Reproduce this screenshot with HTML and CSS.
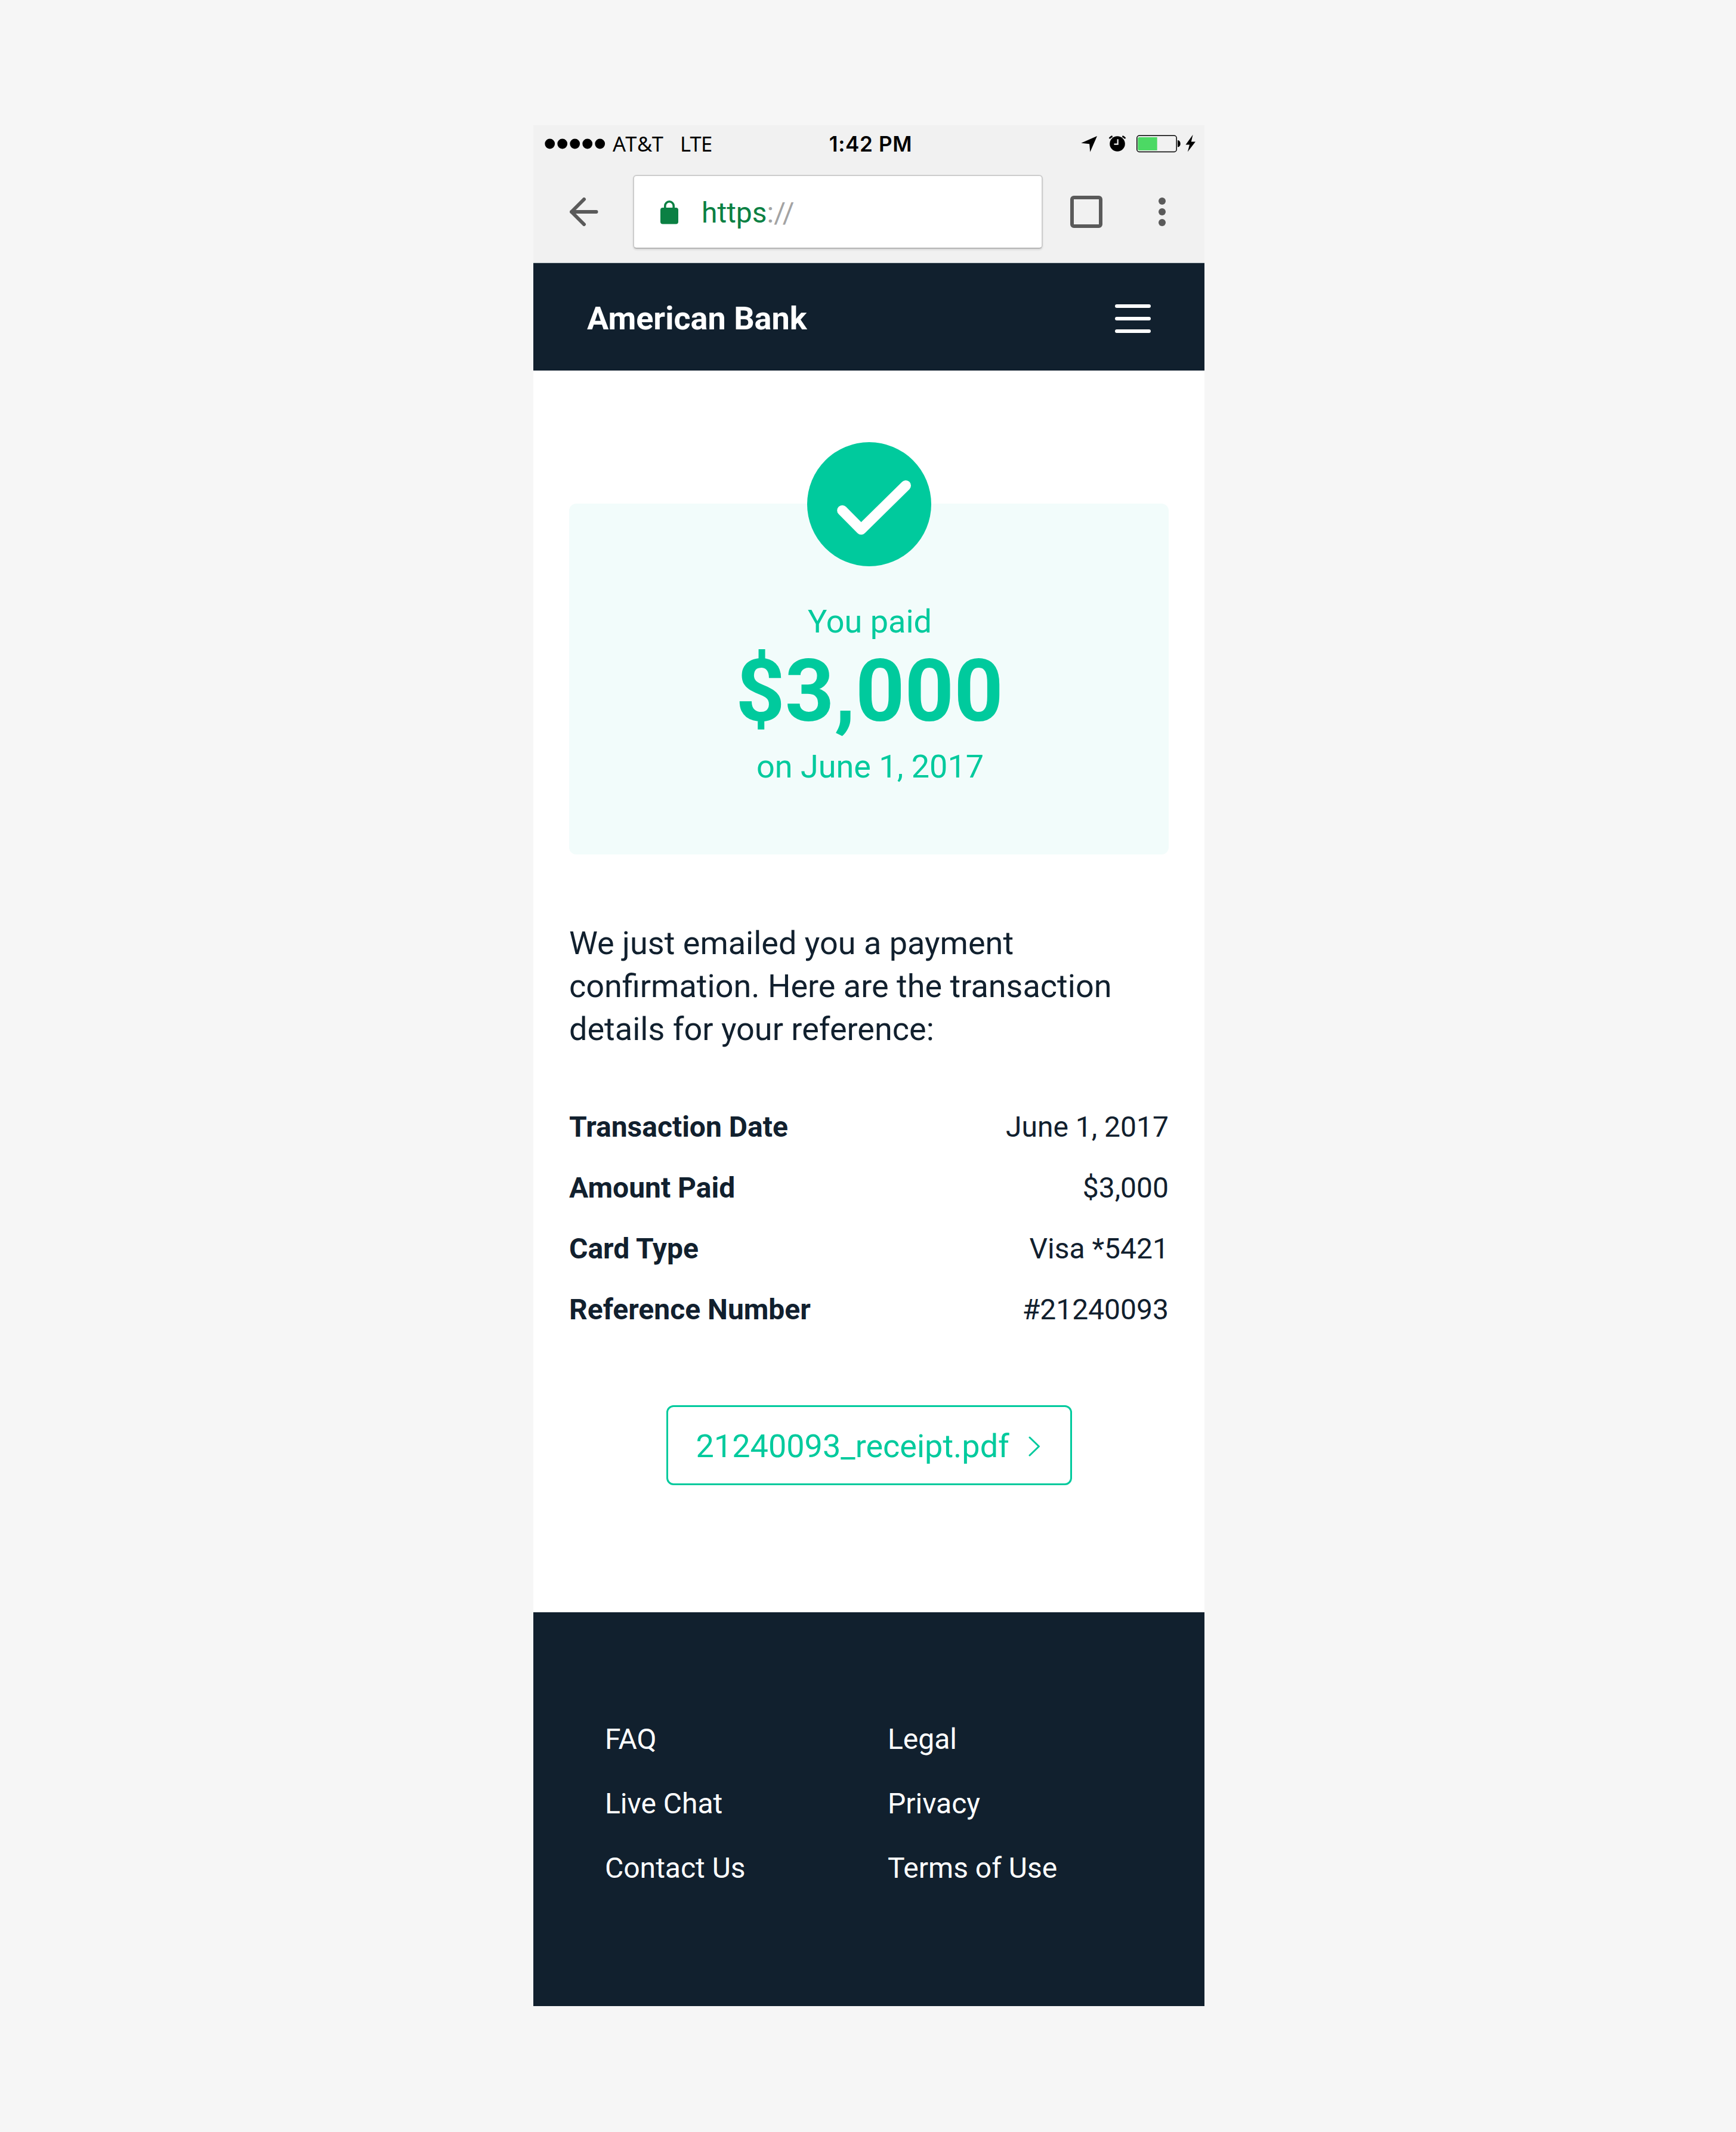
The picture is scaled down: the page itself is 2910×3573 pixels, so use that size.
FILE: index.html
```html
<!DOCTYPE html>
<html lang="en">
<head>
<meta charset="utf-8">
<title>American Bank – Payment confirmation</title>
<link rel="stylesheet" href="styles.css">
</head>
<body>
<div class="phone">
  <div class="browser">
    <div class="status">
      <div class="carrier">
        <svg class="signal" width="102" height="18" viewBox="0 0 102 18"><circle cx="8.7" cy="9" r="8.4"/><circle cx="29.7" cy="9" r="8.4"/><circle cx="50.7" cy="9" r="8.4"/><circle cx="71.7" cy="9" r="8.4"/><circle cx="92.7" cy="9" r="8.4"/></svg>
        <span class="network">AT&amp;T</span>
        <span class="lte">LTE</span>
      </div>
      <span class="clock">1:42 PM</span>
      <svg class="indicators" width="194" height="32" viewBox="1812 225 194 32">
        <path d="M1812.3 239.7 L1839 228 L1827.3 254.7 L1826.2 241.2 Z"/>
        <circle cx="1873" cy="241" r="12.8"/>
        <path d="M1873.7 233.3 V241.7 H1867.5" fill="none" stroke="#f1f1f1" stroke-width="2.2"/>
        <path d="M1859.6 232 A14 14 0 0 1 1864.6 228.2 M1881.4 228.2 A14 14 0 0 1 1886.4 232" fill="none" stroke="#000" stroke-width="2.6"/>
        <rect x="1905.8" y="227.3" width="66.4" height="27.2" rx="4" fill="none" stroke="#000" stroke-width="1.5"/>
        <path d="M1909.3 230 H1939.7 V252 H1909.3 Q1907.4 252 1907.4 250 V232 Q1907.4 230 1909.3 230 Z" fill="#4cd964"/>
        <path d="M1974 235 Q1978.7 235.5 1978.7 240.7 Q1978.7 246 1974 246.4 Z"/>
        <path d="M1999.6 225.7 L1987.5 242.6 L1994 242.6 L1990.8 254.5 L2003.9 237.6 L1996.8 237.6 Z"/>
      </svg>
    </div>
    <div class="toolbar">
      <svg class="back" width="48" height="48" viewBox="0 0 48 48"><path d="M24 3 L3 24 L24 45 M3 24 H44.5" fill="none" stroke="#5a5a5a" stroke-width="6" stroke-linecap="round" stroke-linejoin="round"/></svg>
      <div class="address">
        <svg class="lock" width="30" height="40" viewBox="0 0 30 40"><path d="M7.8 13.5 V9 A7.2 7.2 0 0 1 22.2 9 V13.5" fill="none" stroke="#0b8043" stroke-width="3.6"/><rect x="0" y="12" width="30" height="27.5" rx="4" fill="#0b8043"/></svg>
        <span class="url">https<span class="slashes">://</span></span>
      </div>
      <div class="tabs"></div>
      <svg class="more" width="12" height="48" viewBox="0 0 12 48"><circle cx="6" cy="6" r="6"/><circle cx="6" cy="24" r="6"/><circle cx="6" cy="42" r="6"/></svg>
    </div>
  </div>
  <header class="site-header">
    <span class="brand">American Bank</span>
    <div class="menu"><i></i><i></i><i></i></div>
  </header>
  <main class="content">
    <section class="receipt">
      <svg class="check" width="208" height="208" viewBox="0 0 208 208"><circle cx="104" cy="104" r="104" fill="#00ca9d"/><path d="M58.9 114.4 L90.6 146.3 L165.3 72.7" fill="none" stroke="#fff" stroke-width="17.4" stroke-linecap="round" stroke-linejoin="round"/></svg>
      <p class="paid-label">You paid</p>
      <p class="amount">$3,000</p>
      <p class="paid-date">on June 1, 2017</p>
    </section>
    <p class="message">We just emailed you a payment<br>confirmation. Here are the transaction<br>details for your reference:</p>
    <dl class="details">
      <div class="row"><dt>Transaction Date</dt><dd>June 1, 2017</dd></div>
      <div class="row"><dt>Amount Paid</dt><dd>$3,000</dd></div>
      <div class="row"><dt>Card Type</dt><dd>Visa *5421</dd></div>
      <div class="row"><dt>Reference Number</dt><dd>#21240093</dd></div>
    </dl>
    <a class="download"><span>21240093_receipt.pdf</span><svg width="21" height="36" viewBox="0 0 21 36"><path d="M2 3 L17.5 18 L2 33" fill="none" stroke="#00ca9d" stroke-width="3" stroke-linecap="round" stroke-linejoin="round"/></svg></a>
  </main>
  <footer class="site-footer">
    <ul><li>FAQ</li><li>Live Chat</li><li>Contact Us</li></ul>
    <ul><li>Legal</li><li>Privacy</li><li>Terms of Use</li></ul>
  </footer>
</div>
</body>
</html>
```
FILE: styles.css
```css
* { box-sizing: border-box; margin: 0; padding: 0; }
body { background: #f6f6f6; font-family: Roboto, sans-serif; color: #11202e; padding: 210px 0 0 894px; }
svg { display: block; flex: none; }
.phone { width: 1125px; height: 3152px; background: #fff; display: flex; flex-direction: column; }

.browser { height: 231px; background: #f1f1f1; border-bottom: 1px solid #b9c2c6; }
.status { height: 62px; padding: 0 13px 0 19px; display: grid; grid-template-columns: 1fr auto 1fr; align-items: center; font-family: Inter, sans-serif; font-size: 35px; line-height: 62px; color: #000; }
.carrier { display: flex; align-items: center; font-family: "Noto Sans", sans-serif; font-size: 34.5px; }
.network { margin-left: 12px; width: 88px; letter-spacing: 1.5px; }
.lte { margin-left: 25px; letter-spacing: -0.8px; }
.clock { font-weight: 600; letter-spacing: 0.7px; }
.indicators { justify-self: end; }
.toolbar { height: 168px; padding: 21px 0 0 61px; display: flex; align-items: flex-start; }
.back { margin-top: 38px; }
.address { width: 687px; height: 124px; margin-left: 58px; background: #fff; border: 2px solid #cdcdcd; border-bottom-color: #b5b5b5; border-radius: 6px; box-shadow: 0 2px 3px rgba(0,0,0,.1); display: flex; align-items: center; padding-left: 44px; }
.lock { margin-top: 1px; }
.url { margin: 3px 0 0 39px; font-size: 48px; color: #0b8043; }
.slashes { color: #a3a3a3; }
.tabs { width: 54px; height: 54px; margin: 35px 0 0 46px; border: 6px solid #5a5a5a; border-radius: 6px; }
.more { margin: 38px 0 0 94px; fill: #5a5a5a; }

.site-header { height: 180px; background: #11202e; display: flex; align-items: center; justify-content: space-between; padding: 5px 90px 0; }
.brand { color: #fff; font-weight: 700; font-size: 54px; line-height: 72px; }
.menu { margin-top: 1px; display: flex; flex-direction: column; gap: 15px; }
.menu i { width: 60px; height: 6px; border-radius: 3px; background: #fff; }

.content { height: 2081px; padding: 120px 60px 0; display: flex; flex-direction: column; }
.receipt { margin-top: 103px; height: 588px; border-radius: 12px; background: #f2fcfb; color: #00ca9d; display: flex; flex-direction: column; align-items: center; text-align: center; font-size: 54px; }
.check { margin-top: -103px; }
.paid-label { margin-top: 57px; padding-left: 3px; line-height: 72px; }
.amount { padding-left: 2px; font-size: 144px; font-weight: 700; line-height: 162px; }
.paid-date { margin-top: 9px; padding-left: 4px; line-height: 72px; }
.message { margin-top: 113px; font-size: 54px; line-height: 72px; white-space: nowrap; }
.details { margin-top: 77px; font-size: 48px; }
.row { height: 102px; line-height: 102px; display: flex; justify-content: space-between; }
.row dt { font-weight: 700; }
.download { align-self: center; width: 680px; height: 134px; margin-top: 109px; border: 3px solid #00ca9d; border-radius: 12px; color: #00ca9d; font-size: 54px; line-height: 72px; display: flex; align-items: center; justify-content: space-between; padding: 3px 49px 0 47px; }

.site-footer { height: 660px; background: #11202e; color: #fff; font-size: 48px; line-height: 108px; padding: 159px 120px 0; display: grid; grid-template-columns: 474px 1fr; align-items: start; }
.site-footer ul { list-style: none; }
```
